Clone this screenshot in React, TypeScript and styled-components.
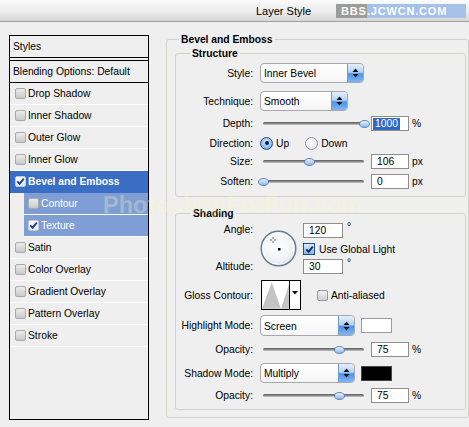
import React from "react";
import styled, { createGlobalStyle } from "styled-components";

const GlobalStyle = createGlobalStyle`
  html, body {
    margin: 0;
    padding: 0;
    background: #efefef;
  }
  body {
    font-family: "Liberation Sans", Arial, sans-serif;
    font-size: 10.3px;
    color: #000;
  }
`;

const Window = styled.div`
  position: relative;
  width: 469px;
  height: 427px;
  overflow: hidden;
  background: #efefef;
`;

const TitleBar = styled.div`
  height: 21px;
  border-bottom: 1px solid #a2a2a2;
  background: linear-gradient(#fbfbfb, #ebebeb 55%, #d6d6d6);
  display: flex;
  align-items: center;
  justify-content: flex-end;
  padding-right: 3px;
`;

const Title = styled.span`
  font-size: 11px;
  margin-right: 25px;
`;

const Badge = styled.div`
  display: flex;
  height: 14px;
  width: 130px;
  font-size: 11px;
  font-weight: bold;
  letter-spacing: 0.8px;
  line-height: 14px;
  color: #fff;
`;

const BadgeDark = styled.span`
  width: 31px;
  padding-left: 5px;
  box-sizing: border-box;
  background: #9c9c9c;
`;

const BadgeLight = styled.span`
  flex: 1;
  background: #a4c1ea;
`;

const Main = styled.div`
  display: flex;
  align-items: flex-start;
  padding: 13px 0 0 9px;
`;

/* left column: list of effects */

const StylesList = styled.div`
  width: 140px;
  height: 385px;
  box-sizing: border-box;
  border: 1px solid #000;
  flex-shrink: 0;
`;

const ListHeader = styled.div`
  height: 21px;
  line-height: 21px;
  padding-left: 3px;
  border-bottom: 1px solid #000;
`;

const BlendRow = styled.div`
  height: 21px;
  line-height: 21px;
  padding-left: 3px;
  margin-top: 2px;
  border-top: 1px solid #000;
  border-bottom: 1px solid #000;
`;

const EffectRow = styled.div<{ $selected?: boolean; $sub?: boolean }>`
  height: 21px;
  display: flex;
  align-items: center;
  gap: 2px;
  padding-left: ${(p) => (p.$sub ? 4 : 5)}px;
  margin-left: ${(p) => (p.$sub ? 14 : 0)}px;
  border-bottom: 1px solid ${(p) => (p.$selected ? "#3a6dc4" : "#fbfbfb")};
  background: ${(p) => (p.$selected ? "#3a6dc4" : p.$sub ? "#7f9ed5" : "transparent")};
  color: ${(p) => (p.$selected || p.$sub ? "#fff" : "#000")};
  font-weight: ${(p) => (p.$selected ? "bold" : "normal")};
`;

const ListCheck = styled.span<{ $checked?: boolean }>`
  width: 11px;
  height: 11px;
  box-sizing: border-box;
  flex-shrink: 0;
  border: 1px solid ${(p) => (p.$checked ? "#c4c8d0" : "#a9a9a9")};
  border-radius: 2px;
  background: ${(p) =>
    p.$checked ? "linear-gradient(#ffffff, #e6e9ee)" : "linear-gradient(#ececec, #c9c9c9)"};
  display: flex;
  align-items: center;
  justify-content: center;
`;

const Tick = ({ size = 9, color = "#1d3c9a" }: { size?: number; color?: string }) => (
  <svg width={size} height={size} viewBox="0 0 9 9">
    <path d="M1.3 4.4 L3.6 6.9 L7.8 1.6" fill="none" stroke={color} strokeWidth="1.9" />
  </svg>
);

/* right column: settings */

const Group = styled.fieldset`
  margin: -2px 0 0 17px;
  width: 303px;
  box-sizing: border-box;
  border: 1px solid #d2d2cc;
  border-radius: 3px;
  padding: 0 2px 7px 8px;
  min-width: 0;
`;

const SubGroup = styled.fieldset<{ $mt: number; $pb: number }>`
  margin: ${(p) => p.$mt}px 0 0 0;
  width: 291px;
  box-sizing: border-box;
  border: 1px solid #d2d2cc;
  border-radius: 3px;
  padding: 0 0 ${(p) => p.$pb}px 0;
  min-width: 0;
`;

const Legend = styled.legend<{ $indent: number }>`
  font-weight: bold;
  line-height: 13px;
  padding: 0 2px;
  margin-left: ${(p) => p.$indent}px;
`;

const Row = styled.div<{ $h: number; $mt: number }>`
  display: flex;
  align-items: center;
  height: ${(p) => p.$h}px;
  margin-top: ${(p) => p.$mt}px;
`;

const Label = styled.span`
  width: 77px;
  flex-shrink: 0;
  text-align: right;
  margin-right: 7px;
  white-space: nowrap;
`;

const Select = styled.div<{ $w: number; $h?: number }>`
  width: ${(p) => p.$w}px;
  height: ${(p) => p.$h ?? 20}px;
  box-sizing: border-box;
  border: 1px solid #a6a8ad;
  border-radius: 4px;
  background: linear-gradient(#ffffff, #f6f6f6);
  display: flex;
  align-items: center;
  padding-left: 3px;
  overflow: hidden;
`;

const SelectText = styled.span`
  flex: 1;
  padding-top: 1px;
`;

const SelectButton = styled.span`
  width: 16px;
  height: 100%;
  box-sizing: border-box;
  border-left: 1px solid #6f9bd3;
  border-radius: 0 3px 3px 0;
  background: linear-gradient(#e6f0fc, #b4d2f6 45%, #4b94ea 55%, #7fb6f4);
  display: flex;
  align-items: center;
  justify-content: center;
`;

const UpDown = () => (
  <svg width="7" height="10" viewBox="0 0 7 10">
    <path d="M3.5 0.5 L6.5 4 L0.5 4 Z M0.5 6 L6.5 6 L3.5 9.5 Z" fill="#111" />
  </svg>
);

const SliderWrap = styled.div`
  position: relative;
  width: 101px;
  height: 9px;
  margin-left: 3px;
  display: flex;
  align-items: center;
  flex-shrink: 0;
`;

const Track = styled.div`
  width: 100%;
  height: 3px;
  border-radius: 2px;
  background: linear-gradient(#5c5c5c, #9a9a9a 70%, #d8d8d8);
`;

const Thumb = styled.span`
  position: absolute;
  top: 1px;
  width: 9px;
  height: 6px;
  margin-left: -5px;
  border: 1px solid #5f86bd;
  border-radius: 50%;
  background: linear-gradient(#eaf3fd, #8db7ec);
`;

const Slider = ({ pos }: { pos: number }) => (
  <SliderWrap>
    <Track />
    <Thumb style={{ left: `${pos * 100}%` }} />
  </SliderWrap>
);

const Field = styled.div<{ $w?: number; $ml?: number; $pl?: number }>`
  width: ${(p) => p.$w ?? 38}px;
  height: 15px;
  box-sizing: border-box;
  margin-left: ${(p) => p.$ml ?? 7}px;
  padding-left: ${(p) => p.$pl ?? 5}px;
  border: 1px solid #8e8e8e;
  background: #fff;
  display: flex;
  align-items: center;
  flex-shrink: 0;
`;

const Selected = styled.span`
  background: #316ac5;
  color: #fff;
  padding: 0 2px;
  line-height: 12px;
`;

const Unit = styled.span`
  margin-left: 3px;
`;

const Degree = styled.span`
  align-self: flex-start;
  margin: -2px 0 0 4px;
  font-size: 10px;
`;

const Radio = styled.span<{ $on?: boolean; $ml?: number }>`
  width: 13px;
  height: 13px;
  box-sizing: border-box;
  border-radius: 50%;
  margin-left: ${(p) => p.$ml ?? 0}px;
  border: 1px solid ${(p) => (p.$on ? "#24508e" : "#8e9398")};
  background: ${(p) =>
    p.$on
      ? "radial-gradient(circle at 50% 40%, #e6f1fd, #8fbaf0 60%, #4b86d6)"
      : "radial-gradient(circle at 40% 35%, #ffffff, #e9e9e9 70%, #cfcfcf)"};
  display: flex;
  align-items: center;
  justify-content: center;
  flex-shrink: 0;
  &::after {
    content: "";
    display: ${(p) => (p.$on ? "block" : "none")};
    width: 4px;
    height: 4px;
    border-radius: 50%;
    background: #0d1a33;
  }
`;

const OptionText = styled.span<{ $ml: number }>`
  margin-left: ${(p) => p.$ml}px;
`;

const AngleBlock = styled.div`
  display: flex;
  height: 51px;
  margin-top: 3px;
`;

const AngleLabels = styled.div`
  width: 77px;
  flex-shrink: 0;
  display: flex;
  flex-direction: column;
  justify-content: space-between;
  text-align: right;
  line-height: 13px;
  padding-bottom: 1px;
  margin-right: 7px;
`;

const DialBox = styled.div`
  width: 37px;
  height: 37px;
  margin-top: 7px;
`;

const AngleValues = styled.div`
  display: flex;
  flex-direction: column;
  margin-left: 6px;
`;

const ValueLine = styled.div<{ $h: number; $mt: number }>`
  display: flex;
  align-items: center;
  height: ${(p) => p.$h}px;
  margin-top: ${(p) => p.$mt}px;
`;

const BlueCheck = styled.span`
  width: 12px;
  height: 12px;
  box-sizing: border-box;
  border: 1px solid #1f4f86;
  background: linear-gradient(#dcebfc, #86b4ec);
  display: flex;
  align-items: center;
  justify-content: center;
  margin-right: 4px;
`;

const GreyCheck = styled.span`
  width: 11px;
  height: 11px;
  box-sizing: border-box;
  border: 1px solid #9a9a9a;
  border-radius: 2px;
  background: linear-gradient(#f2f2f2, #cdcdcd);
  margin: 0 3px 0 16px;
`;

const ContourPicker = styled.div`
  width: 40px;
  height: 30px;
  box-sizing: border-box;
  margin-left: 1px;
  border: 1px solid #000;
  background: #fff;
  display: flex;
  flex-shrink: 0;
`;

const ContourArrow = styled.span`
  width: 11px;
  border-left: 1px solid #000;
  display: flex;
  justify-content: center;
  padding-top: 10px;
  box-sizing: border-box;
`;

const Swatch = styled.span<{ $color: string }>`
  width: 31px;
  height: 15px;
  box-sizing: border-box;
  margin-left: 6px;
  border: 1px solid ${(p) => (p.$color === "#000" ? "#444" : "#9c9c9c")};
  background: ${(p) => p.$color};
`;

/* faint site stamp laid over the dialog */
const Watermark = styled.div`
  position: absolute;
  left: 103px;
  top: 194px;
  font-size: 23.5px;
  line-height: 22px;
  font-weight: bold;
  color: rgba(255, 248, 185, 0.3);
  pointer-events: none;
  white-space: nowrap;
`;

const Dial = () => (
  <svg width="37" height="37" viewBox="0 0 37 37">
    <defs>
      <radialGradient id="dialFill" cx="45%" cy="40%" r="60%">
        <stop offset="0%" stopColor="#ffffff" />
        <stop offset="75%" stopColor="#f1f3f6" />
        <stop offset="100%" stopColor="#d9dee6" />
      </radialGradient>
    </defs>
    <circle cx="18.5" cy="18.5" r="17.3" fill="url(#dialFill)" stroke="#6a7a90" strokeWidth="1.5" />
    <circle cx="18.5" cy="18.5" r="15.7" fill="none" stroke="#ffffff" strokeWidth="0.8" />
    <g stroke="#666" strokeWidth="1">
      <line x1="13" y1="7" x2="13" y2="9" />
      <line x1="13" y1="11" x2="13" y2="13" />
      <line x1="10" y1="10" x2="12" y2="10" />
      <line x1="14" y1="10" x2="16" y2="10" />
    </g>
    <rect x="18" y="18" width="2.5" height="2.5" fill="#000" />
  </svg>
);

const ContourCurve = () => (
  <svg width="28" height="28" viewBox="0 0 28 28">
    <polygon points="0,28 10,1 19.5,28 28,2 28,28" fill="#c4c4c4" />
  </svg>
);

const DownArrow = () => (
  <svg width="6" height="4" viewBox="0 0 6 4">
    <path d="M0 0 L6 0 L3 3.5 Z" fill="#111" />
  </svg>
);

const effects = [
  { name: "Drop Shadow" },
  { name: "Inner Shadow" },
  { name: "Outer Glow" },
  { name: "Inner Glow" },
  { name: "Bevel and Emboss", checked: true, selected: true },
  { name: "Contour", sub: true },
  { name: "Texture", checked: true, sub: true },
  { name: "Satin" },
  { name: "Color Overlay" },
  { name: "Gradient Overlay" },
  { name: "Pattern Overlay" },
  { name: "Stroke" },
];

const App = () => {
  return (
    <>
      <GlobalStyle />
      <Window>
        <TitleBar>
          <Title>Layer Style</Title>
          <Badge>
            <BadgeDark>BBS</BadgeDark>
            <BadgeLight>.JCWCN.COM</BadgeLight>
          </Badge>
        </TitleBar>

        <Main>
          <StylesList>
            <ListHeader>Styles</ListHeader>
            <BlendRow>Blending Options: Default</BlendRow>
            {effects.map((fx) => (
              <EffectRow key={fx.name} $selected={fx.selected} $sub={fx.sub}>
                <ListCheck $checked={fx.checked}>{fx.checked && <Tick />}</ListCheck>
                {fx.name}
              </EffectRow>
            ))}
          </StylesList>

          <Group>
            <Legend $indent={4}>Bevel and Emboss</Legend>

            <SubGroup $mt={1} $pb={7}>
              <Legend $indent={14}>Structure</Legend>
              <Row $h={20} $mt={3}>
                <Label>Style:</Label>
                <Select $w={104}>
                  <SelectText>Inner Bevel</SelectText>
                  <SelectButton>
                    <UpDown />
                  </SelectButton>
                </Select>
              </Row>
              <Row $h={20} $mt={8}>
                <Label>Technique:</Label>
                <Select $w={88}>
                  <SelectText>Smooth</SelectText>
                  <SelectButton>
                    <UpDown />
                  </SelectButton>
                </Select>
              </Row>
              <Row $h={15} $mt={5}>
                <Label>Depth:</Label>
                <Slider pos={1} />
                <Field $pl={1}>
                  <Selected>1000</Selected>
                </Field>
                <Unit>%</Unit>
              </Row>
              <Row $h={14} $mt={5}>
                <Label>Direction:</Label>
                <Radio $on />
                <OptionText $ml={3}>Up</OptionText>
                <Radio $ml={16} />
                <OptionText $ml={3}>Down</OptionText>
              </Row>
              <Row $h={15} $mt={4}>
                <Label>Size:</Label>
                <Slider pos={0.46} />
                <Field>106</Field>
                <Unit>px</Unit>
              </Row>
              <Row $h={15} $mt={5}>
                <Label>Soften:</Label>
                <Slider pos={0} />
                <Field>0</Field>
                <Unit>px</Unit>
              </Row>
            </SubGroup>

            <SubGroup $mt={10} $pb={6}>
              <Legend $indent={15}>Shading</Legend>
              <AngleBlock>
                <AngleLabels>
                  <span>Angle:</span>
                  <span>Altitude:</span>
                </AngleLabels>
                <DialBox>
                  <Dial />
                </DialBox>
                <AngleValues>
                  <ValueLine $h={15} $mt={0}>
                    <Field $w={40} $ml={0}>
                      120
                    </Field>
                    <Degree>°</Degree>
                  </ValueLine>
                  <ValueLine $h={12} $mt={5}>
                    <BlueCheck>
                      <Tick size={9} color="#0b2a66" />
                    </BlueCheck>
                    Use Global Light
                  </ValueLine>
                  <ValueLine $h={15} $mt={4}>
                    <Field $w={40} $ml={0}>
                      30
                    </Field>
                    <Degree>°</Degree>
                  </ValueLine>
                </AngleValues>
              </AngleBlock>
              <Row $h={30} $mt={6}>
                <Label>Gloss Contour:</Label>
                <ContourPicker>
                  <ContourCurve />
                  <ContourArrow>
                    <DownArrow />
                  </ContourArrow>
                </ContourPicker>
                <GreyCheck />
                Anti-aliased
              </Row>
              <Row $h={21} $mt={5}>
                <Label>Highlight Mode:</Label>
                <Select $w={95} $h={21}>
                  <SelectText>Screen</SelectText>
                  <SelectButton>
                    <UpDown />
                  </SelectButton>
                </Select>
                <Swatch $color="#fff" />
              </Row>
              <Row $h={15} $mt={6}>
                <Label>Opacity:</Label>
                <Slider pos={0.75} />
                <Field>75</Field>
                <Unit>%</Unit>
              </Row>
              <Row $h={20} $mt={6}>
                <Label>Shadow Mode:</Label>
                <Select $w={95}>
                  <SelectText>Multiply</SelectText>
                  <SelectButton>
                    <UpDown />
                  </SelectButton>
                </Select>
                <Swatch $color="#000" />
              </Row>
              <Row $h={15} $mt={5}>
                <Label>Opacity:</Label>
                <Slider pos={0.75} />
                <Field>75</Field>
                <Unit>%</Unit>
              </Row>
            </SubGroup>
          </Group>
        </Main>

        <Watermark>PhotoshopForFun.com</Watermark>
      </Window>
    </>
  );
};

export default App;
